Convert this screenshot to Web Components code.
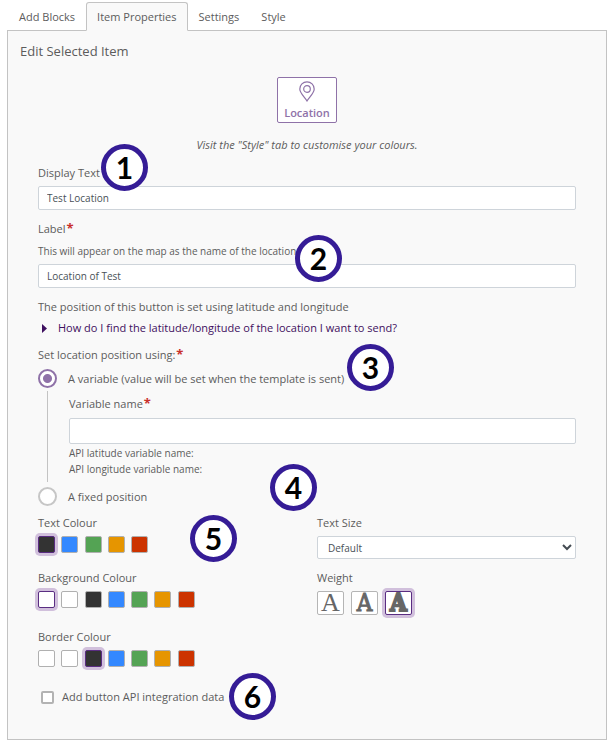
<!DOCTYPE html>
<html lang="en">
<head>
<meta charset="utf-8">
<title>Item Properties</title>
<style>
  body {
    margin: 0;
    background: #fff;
    color: #5c5c5c;
    font: 11px/16px "Open Sans", sans-serif;
    --line: #c3c3c3;
    --field: #ced4da;
    --purple: #8f72a8;
    --deep: #5a2d82;
    --glow: #d1c0dc;
  }
</style>
</head>
<body>
<item-editor></item-editor>
<script>
const define = (name, html) => customElements.define(name, class extends HTMLElement {
  connectedCallback() {
    if (this.shadowRoot) return;
    const root = this.attachShadow({ mode: "open" });
    root.innerHTML = "<style>*{box-sizing:border-box}button,input,select{font:inherit;color:inherit;margin:0}</style>" +
      (typeof html === "function" ? html(this) : html);
  }
});

define("required-mark", `<style>:host{display:inline-block;color:#c9302c;font-size:13px;font-weight:700;line-height:10px;margin-left:1px}</style>*`);

define("tab-bar", el => `
  <style>
    :host{display:block}
    nav{display:flex;margin-bottom:-1px;padding-left:1px}
    button{height:29px;padding:0 10px;border:1px solid transparent;border-radius:3px 3px 0 0;background:none;white-space:nowrap}
    button[aria-selected=true]{background:#f9f9f9;border-color:var(--line);border-bottom-color:#f9f9f9;position:relative}
  </style>
  <nav role="tablist">${el.getAttribute("tabs").split("|").map(t =>
    `<button role="tab" aria-selected="${t === el.getAttribute("active")}">${t}</button>`).join("")}</nav>`);

define("location-button", `
  <style>
    :host{display:flex;justify-content:center}
    button{display:flex;flex-direction:column;align-items:center;gap:3px;min-width:60px;height:46px;padding:3px 6px 0;
      border:1px solid var(--purple);border-radius:2px;background:#fff;color:var(--purple);font-weight:600}
    svg{flex:none}
  </style>
  <button>
    <svg width="16" height="21" viewBox="0 0 16 21" fill="none" stroke="currentColor" stroke-width="1.2" aria-hidden="true">
      <path d="M8 20C5.500 16 .8 12 .8 8a7.200 7.200 0 0 1 14.400 0c0 4-4.700 8-7.200 12Z"/><circle cx="8" cy="8" r="3.300"/>
    </svg>
    <span><slot></slot></span>
  </button>`);

define("text-field", el => `
  <style>
    :host{display:block}
    label{display:block}
    p{margin:6px 0 0;font-size:10px}
    input{display:block;width:100%;height:24px;margin-top:5px;padding:0 8px;border:1px solid var(--field);
      border-radius:2px;background:#fff;font-size:10px;color:#495057}
    :host([large]) input{height:26px;margin-top:6px}
  </style>
  <label for="f">${el.getAttribute("label")}<required-mark></required-mark></label>
  ${el.hasAttribute("hint") ? `<p id="h">${el.getAttribute("hint")}</p>` : ""}
  <input id="f" type="text" required value="${el.getAttribute("value") || ""}" ${el.hasAttribute("hint") ? 'aria-describedby="h"' : ""}>`);

define("help-toggle", `
  <style>
    :host{display:block}
    button{display:flex;align-items:center;gap:11px;padding:0 0 0 4px;border:0;background:none;color:#3f1060;text-align:left}
    svg{flex:none}
  </style>
  <button aria-expanded="false"><svg width="5" height="9" viewBox="0 0 5 9" aria-hidden="true"><path d="M0 0L5 4.500L0 9Z" fill="currentColor"/></svg><slot></slot></button>`);

define("position-choice", `
  <style>
    :host{display:block}
    fieldset{border:0;margin:0;padding:0;min-width:0}
    legend{padding:0}
    .row{display:flex;align-items:center;gap:11px;height:19px}
    .first{margin-top:6px}
    input[type=radio]{appearance:none;flex:none;width:19px;height:19px;border:2px solid #c6c6c6;border-radius:50%;background:#fff}
    input[type=radio]:checked{border-color:var(--purple);background:radial-gradient(circle,var(--purple) 4px,#fff 5px)}
    .detail{margin:3px 0 5px 9px;padding:5px 0 5px 21px;border-left:1px solid var(--line)}
    .api{margin:1px 0 0;font-size:10px}
  </style>
  <fieldset>
    <legend>Set location position using:<required-mark></required-mark></legend>
    <div class="row first"><input type="radio" name="p" id="v" checked><label for="v">A variable (value will be set when the template is sent)</label></div>
    <div class="detail">
      <text-field large label="Variable name"></text-field>
      <p class="api">API latitude variable name:<br>API longitude variable name:</p>
    </div>
    <div class="row"><input type="radio" name="p" id="x"><label for="x">A fixed position</label></div>
  </fieldset>`);

define("colour-picker", el => `
  <style>
    :host{display:block}
    fieldset{border:0;margin:0;padding:0}
    legend{padding:0}
    div{display:grid;grid-template-columns:repeat(7,1fr);width:163px;margin-top:5px}
    input{appearance:none;width:17px;height:17px;border:1px solid #b0b0b0;border-radius:2px;background:var(--c)}
    input:checked{border-color:var(--deep);box-shadow:0 0 0 3px var(--glow)}
  </style>
  <fieldset><legend>${el.getAttribute("label")}</legend>
  <div>${el.getAttribute("colours").split(" ").map((c, i) =>
    `<input type="radio" name="c" aria-label="${c}" style="--c:${c}" ${i == el.getAttribute("selected") ? "checked" : ""}>`).join("")}</div></fieldset>`);

define("size-select", `
  <style>
    :host{display:block}
    label{display:block}
    .box{display:grid;align-items:center;margin-top:5px}
    select,svg{grid-area:1/1}
    select{appearance:none;width:100%;height:23px;padding:0 10px;border:1px solid var(--field);border-radius:2px;background:#fff;font-size:10px;color:#495057}
    svg{justify-self:end;margin-right:4px;pointer-events:none}
  </style>
  <label for="s">Text Size</label>
  <div class="box"><select id="s"><option>Default</option></select>
  <svg width="10" height="7" viewBox="0 0 10 7" fill="none" stroke="#444b52" stroke-width="2" aria-hidden="true"><path d="M1 1L5 5L9 1"/></svg></div>`);

define("weight-picker", `
  <style>
    :host{display:block}
    div{display:flex;gap:7px;margin-top:5px}
    button{display:flex;align-items:center;justify-content:center;width:27px;height:24px;padding:0;border:1px solid #b5b5b5;border-radius:2px;
      background:#fff;color:#666;font:24px/22px "DejaVu Serif",serif}
    .light{font-family:"Liberation Serif",serif;font-size:26px}
    .medium{font-family:"DejaVu Serif Condensed","DejaVu Serif",serif;-webkit-text-stroke:1px #666}
    .bold{font-family:"DejaVu Serif Condensed","DejaVu Serif",serif;font-weight:700;-webkit-text-stroke:2px #666}
    [aria-pressed=true]{border-color:var(--deep);box-shadow:0 0 0 3px var(--glow)}
  </style>
  <span id="w">Weight</span>
  <div role="group" aria-labelledby="w"><button class="light" aria-pressed="false">A</button><button class="medium" aria-pressed="false">A</button><button class="bold" aria-pressed="true">A</button></div>`);

define("check-option", `
  <style>
    :host{display:block}
    label{display:flex;align-items:center;gap:8px;padding-left:3px}
    input{appearance:none;width:13px;height:13px;border:2px solid #b3b3b3;border-radius:2px;background:#fff}
  </style>
  <label><input type="checkbox"><slot></slot></label>`);

define("step-badge", `
  <style>
    :host{position:absolute;display:grid;place-items:center;width:47px;height:47px;box-sizing:border-box;padding-bottom:2px;
      border:5px solid #351c96;border-radius:50%;background:#fff;color:#000;font:700 30px/34px Lato,sans-serif}
  </style><span><slot></slot></span>`);

define("item-editor", `
  <style>
    :host{display:block;position:relative;padding:2px 6px 9px 7px}
    main{border:1px solid var(--line);background:#f9f9f9;padding:11px 30px 34px}
    h1{margin:0 -18px 17px;font-size:13px;line-height:18px;font-weight:400}
    .note{margin:14px 0 12px;text-align:center;font-style:italic}
    .label{margin-top:11px}
    .about{margin:11px 0 5px}
    position-choice{margin-top:11px}
    .style{display:grid;grid-template-columns:1fr 1fr;column-gap:20px;margin:9px 0 22px}
    .style>:nth-child(n+3){margin-top:11px}
    .style>:nth-child(5){margin-top:14px}
  </style>
  <tab-bar tabs="Add Blocks|Item Properties|Settings|Style" active="Item Properties"></tab-bar>
  <main>
    <h1>Edit Selected Item</h1>
    <location-button>Location</location-button>
    <p class="note">Visit the "Style" tab to customise your colours.</p>
    <text-field label="Display Text" value="Test Location"></text-field>
    <text-field class="label" label="Label" hint="This will appear on the map as the name of the location" value="Location of Test"></text-field>
    <p class="about">The position of this button is set using latitude and longitude</p>
    <help-toggle>How do I find the latitude/longitude of the location I want to send?</help-toggle>
    <position-choice></position-choice>
    <div class="style">
      <colour-picker label="Text Colour" selected="0" colours="#333333 #3388ff #54a354 #e69500 #cc3300"></colour-picker>
      <size-select></size-select>
      <colour-picker label="Background Colour" selected="0" colours="#ffffff #ffffff #333333 #3388ff #54a354 #e69500 #cc3300"></colour-picker>
      <weight-picker></weight-picker>
      <colour-picker label="Border Colour" selected="2" colours="#ffffff #ffffff #333333 #3388ff #54a354 #e69500 #cc3300"></colour-picker>
    </div>
    <check-option>Add button API integration data</check-option>
  </main>
  <step-badge style="left:101px;top:144px">1</step-badge>
  <step-badge style="left:295px;top:235px">2</step-badge>
  <step-badge style="left:347px;top:344px">3</step-badge>
  <step-badge style="left:270px;top:464px">4</step-badge>
  <step-badge style="left:190px;top:515px">5</step-badge>
  <step-badge style="left:229px;top:673px">6</step-badge>`);
</script>
</body>
</html>
